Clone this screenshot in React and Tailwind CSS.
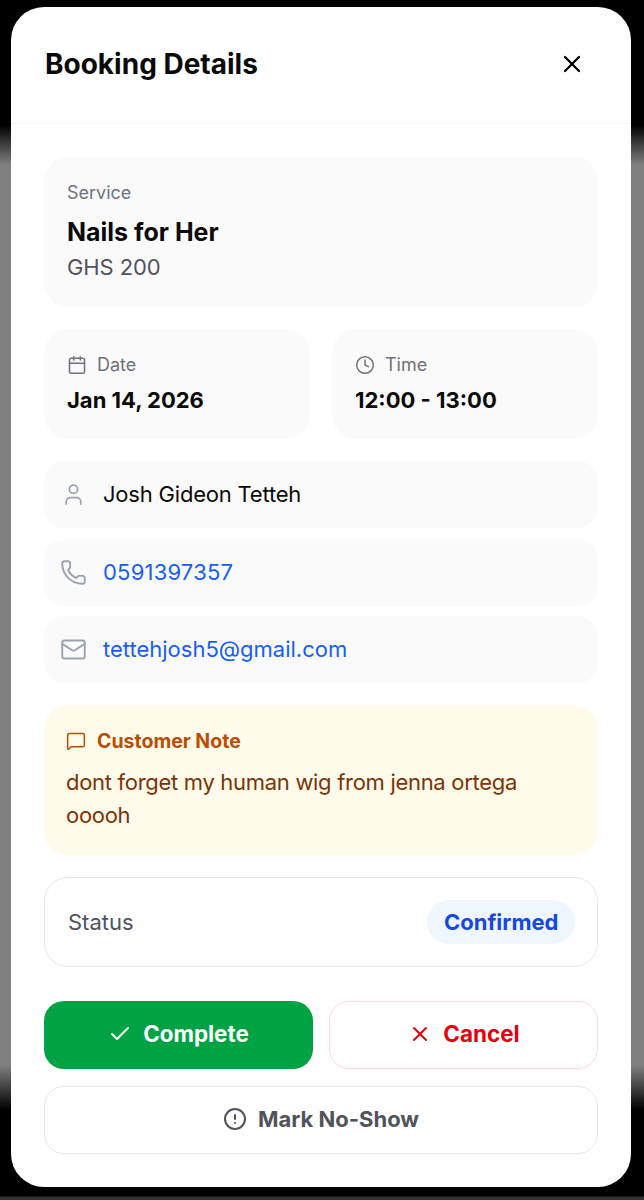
import React from "react";
import { X, Calendar, Clock, User, Phone, Mail, MessageSquare, Check, CircleAlert } from "lucide-react";

function Row({ icon: I, children, cls, mb, big }) {
  return (
    <div className={`flex h-[67px] items-center rounded-[20px] bg-[#fafafa] pb-[1px] ${big ? "gap-[16px] pl-[16px]" : "gap-[17px] pl-[17px]"} ${mb}`}>
      <I className={`${big ? "h-[27px] w-[27px]" : "h-[25px] w-[25px]"} shrink-0 text-[#9ca3af]`} strokeWidth={1.7} />
      <span className={`text-[22px] leading-none ${cls}`}>{children}</span>
    </div>
  );
}

export default function App() {
  return (
    <div className="h-[1200px] w-[644px] overflow-hidden bg-[linear-gradient(to_bottom,#000_0px,#000_125px,#808080_165px,#808080_1065px,#000_1110px,#000_1196px,#333_1197px,#333_1200px)] pl-[11px] pt-[7px] font-['Inter',sans-serif]">
      <div className="h-[1180px] w-[620px] rounded-[33px] bg-white">
        <div className="flex h-[117px] items-start justify-between border-b border-[#f3f4f6] pl-[34px] pr-[45px] pt-[40px]">
          <h1 className="text-[28px] font-bold leading-[34px] text-[#0a0a0a]">Booking Details</h1>
          <X className="mt-[3px] h-[28px] w-[28px] text-black" strokeWidth={2} />
        </div>
        <div className="px-[33px] pt-[33px]">
          <div className="mb-[22px] h-[150px] rounded-[24px] bg-[#fafafa] px-[23px] pt-[24px]">
            <div className="text-[18px] leading-[24px] text-[#6f7280]">Service</div>
            <div className="mt-[12px] text-[25px] font-bold leading-[30px] text-[#0a0a0a]">Nails for Her</div>
            <div className="mt-[5px] text-[22px] leading-[30px] tracking-[-0.1px] text-[#52525c]">GHS 200</div>
          </div>
          <div className="mb-[22px] grid h-[110px] grid-cols-2 gap-[22px]">
            <div className="rounded-[24px] bg-[#fafafa] pl-[23px] pt-[24px]">
              <div className="flex items-center gap-[10px] text-[18px] leading-[24px] text-[#71717b]"><Calendar className="h-[20px] w-[20px]" strokeWidth={1.8} />Date</div>
              <div className="mt-[9px] text-[22px] font-bold leading-[28px] text-[#0a0a0a]">Jan 14, 2026</div>
            </div>
            <div className="rounded-[24px] bg-[#fafafa] pl-[23px] pt-[24px]">
              <div className="flex items-center gap-[10px] text-[18px] leading-[24px] text-[#71717b]"><Clock className="h-[20px] w-[20px]" strokeWidth={1.8} />Time</div>
              <div className="mt-[9px] text-[22px] font-bold leading-[28px] text-[#0a0a0a]">12:00 - 13:00</div>
            </div>
          </div>
          <Row icon={User} cls="tracking-[-0.2px] text-[#0a0a0a]" mb="mb-[11px]">Josh Gideon Tetteh</Row>
          <Row icon={Phone} big cls="tracking-[0.2px] text-[#155dfc]" mb="mb-[10px]">0591397357</Row>
          <Row icon={Mail} big cls="text-[#155dfc]" mb="mb-[22px]">tettehjosh5@gmail.com</Row>
          <div className="mb-[22px] h-[150px] rounded-[24px] bg-[#fffbeb] pl-[22px] pr-[23px] pt-[24px]">
            <div className="flex items-center gap-[11px] text-[19.5px] font-bold leading-[24px] text-[#bb4d00]"><MessageSquare className="h-[20px] w-[20px]" strokeWidth={1.8} />Customer Note</div>
            <div className="mt-[13px] text-[22px] leading-[33px] tracking-[-0.3px] text-[#7b3306]">dont forget my human wig from jenna ortega ooooh</div>
          </div>
          <div className="mb-[34px] flex h-[90px] items-center justify-between rounded-[24px] border border-[#e5e7eb] pl-[23px] pr-[22px]">
            <span className="text-[22px] text-[#52525c]">Status</span>
            <span className="flex h-[44px] items-center rounded-full bg-[#eff6ff] px-[16.5px] text-[22px] font-bold text-[#1447e6]">Confirmed</span>
          </div>
          <div className="mb-[17px] grid h-[68px] grid-cols-2 gap-[16px]">
            <button className="flex items-center justify-center gap-[11px] rounded-[20px] bg-[#00a344] pb-[2px] text-[22.4px] font-bold text-white"><Check className="h-[24px] w-[24px]" strokeWidth={2} />Complete</button>
            <button className="flex items-center justify-center gap-[11px] rounded-[20px] border border-[#ffd6d9] bg-white pb-[2px] pl-[1px] text-[22.5px] font-bold text-[#e7000b]"><X className="h-[24px] w-[24px]" strokeWidth={2} />Cancel</button>
          </div>
          <button className="flex h-[68px] w-full items-center justify-center gap-[11px] rounded-[20px] border border-[#e5e7eb] bg-white pb-[2px] text-[22px] font-bold text-[#52525c]"><CircleAlert className="h-[24px] w-[24px]" strokeWidth={2} />Mark No-Show</button>
        </div>
      </div>
    </div>
  );
}
